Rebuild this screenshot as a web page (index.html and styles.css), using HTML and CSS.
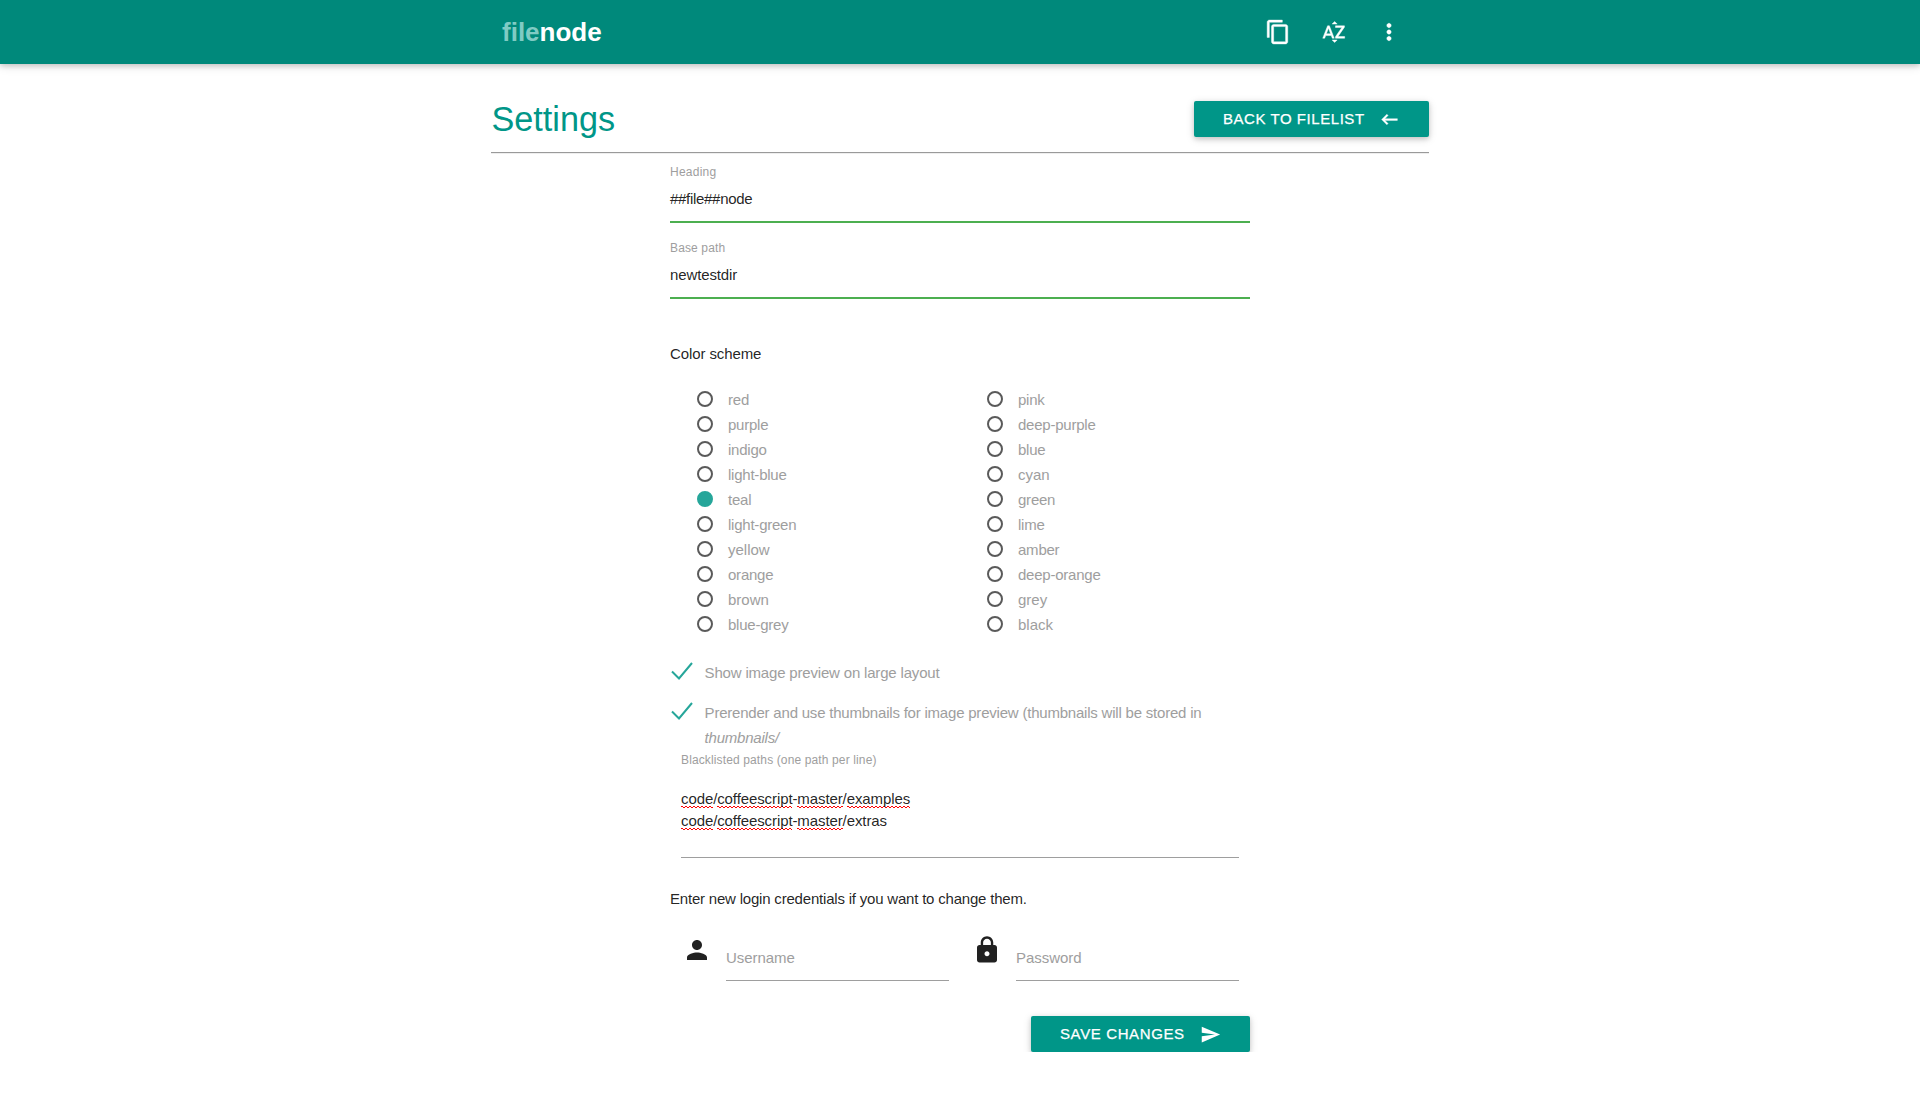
FILE: index.html
```html
<!DOCTYPE html>
<html lang="en">
<head>
<meta charset="utf-8">
<title>filenode</title>
<link rel="stylesheet" href="styles.css">
</head>
<body>
<nav class="navbar">
  <div class="nav-inner">
    <a class="logo"><span class="accent">file</span>node</a>
    <ul class="nav-actions">
      <li><svg class="nav-icon" viewBox="0 0 24 24"><path d="M16 1H4c-1.100 0-2 .9-2 2v14h2V3h12V1zm3 4H8c-1.100 0-2 .9-2 2v14c0 1.100.9 2 2 2h11c1.100 0 2-.9 2-2V7c0-1.100-.9-2-2-2zm0 16H8V7h11v14z"/></svg></li>
      <li><svg class="nav-icon" viewBox="0 0 24 24"><path d="M14.940 4.660h-4.720l2.360-2.360zm-4.690 14.710h4.660l-2.330 2.330zM6.100 6.270L1.600 17.730h1.840l.92-2.450h5.110l.92 2.450h1.840L7.740 6.270H6.100zm-1.130 7.370l1.940-5.180 1.940 5.180H4.970zm10.760 2.500h6.120v1.590h-8.530v-1.290l5.920-8.560h-5.880v-1.600h8.300v1.260l-5.930 8.600z"/></svg></li>
      <li><svg class="nav-icon nav-icon-more" viewBox="0 0 24 24"><path d="M12 8c1.100 0 2-.9 2-2s-.9-2-2-2-2 .9-2 2 .9 2 2 2zm0 2c-1.100 0-2 .9-2 2s.9 2 2 2 2-.9 2-2-.9-2-2-2zm0 6c-1.100 0-2 .9-2 2s.9 2 2 2 2-.9 2-2-.9-2-2-2z"/></svg></li>
    </ul>
  </div>
</nav>
<main class="container">
  <header class="page-head">
    <h1 class="title">Settings</h1>
    <a class="btn btn-back"><span class="back-text">Back to filelist</span><svg class="btn-icon" viewBox="0 0 24 24"><path d="M21 11H6.830l3.580-3.590L9 6l-6 6 6 6 1.410-1.410L6.830 13H21z"/></svg></a>
  </header>
  <hr class="rule">
  <form class="form">
    <div class="field">
      <label class="label">Heading</label>
      <div class="value value-heading">##file##node</div>
    </div>
    <div class="field">
      <label class="label label-tight">Base path</label>
      <div class="value value-base">newtestdir</div>
    </div>
    <p class="section">Color scheme</p>
    <div class="colors">
      <label class="radio"><i class="dot"></i>red</label>
      <label class="radio"><i class="dot"></i>pink</label>
      <label class="radio"><i class="dot"></i>purple</label>
      <label class="radio"><i class="dot"></i>deep-purple</label>
      <label class="radio"><i class="dot"></i>indigo</label>
      <label class="radio"><i class="dot"></i>blue</label>
      <label class="radio"><i class="dot"></i>light-blue</label>
      <label class="radio wide"><i class="dot"></i>cyan</label>
      <label class="radio"><i class="dot checked"></i>teal</label>
      <label class="radio"><i class="dot"></i>green</label>
      <label class="radio"><i class="dot"></i>light-green</label>
      <label class="radio"><i class="dot"></i>lime</label>
      <label class="radio wide"><i class="dot"></i>yellow</label>
      <label class="radio"><i class="dot"></i>amber</label>
      <label class="radio"><i class="dot"></i>orange</label>
      <label class="radio"><i class="dot"></i>deep-orange</label>
      <label class="radio wide"><i class="dot"></i>brown</label>
      <label class="radio wide"><i class="dot"></i>grey</label>
      <label class="radio"><i class="dot"></i>blue-grey</label>
      <label class="radio wide"><i class="dot"></i>black</label>
    </div>
    <div class="check-row">
      <svg class="tick" viewBox="0 0 22 18"><path d="M1 9.500L8 16.500L21 1"/></svg>
      <span class="check-text">Show image preview on large layout</span>
    </div>
    <div class="check-row check-row-last">
      <svg class="tick" viewBox="0 0 22 18"><path d="M1 9.500L8 16.500L21 1"/></svg>
      <span class="check-text">Prerender and use thumbnails for image preview (thumbnails will be stored in <em>thumbnails/</em></span>
    </div>
    <div class="blacklist">
      <label class="label label-tight">Blacklisted paths (one path per line)</label>
      <div class="area"><div><span class="typo">code</span>/<span class="typo">coffeescript</span>-<span class="typo">master</span>/<span class="typo">examples</span></div><div><span class="typo">code</span>/<span class="typo">coffeescript</span>-<span class="typo">master</span>/extras</div></div>
    </div>
    <p class="hint">Enter new login credentials if you want to change them.</p>
    <div class="credentials">
      <div class="cred">
        <svg class="prefix" viewBox="0 0 24 24"><path d="M12 12c2.210 0 4-1.790 4-4s-1.790-4-4-4-4 1.790-4 4 1.790 4 4 4zm0 2c-2.670 0-8 1.340-8 4v2h16v-2c0-2.660-5.330-4-8-4z"/></svg>
        <span class="cred-input">Username</span>
      </div>
      <div class="cred">
        <svg class="prefix" viewBox="0 0 24 24"><path d="M18 8h-1V6c0-2.760-2.240-5-5-5S7 3.240 7 6v2H6c-1.100 0-2 .9-2 2v10c0 1.100.9 2 2 2h12c1.100 0 2-.9 2-2V10c0-1.100-.9-2-2-2zm-6 9c-1.100 0-2-.9-2-2s.9-2 2-2 2 .9 2 2-.9 2-2 2zm3.100-9H8.900V6c0-1.710 1.390-3.100 3.100-3.100s3.100 1.390 3.100 3.100v2z"/></svg>
        <span class="cred-input">Password</span>
      </div>
    </div>
    <div class="actions">
      <a class="btn btn-save"><span class="save-text">Save changes</span><svg class="btn-icon" viewBox="0 0 24 24"><path d="M2.010 21L23 12 2.010 3 2 10l15 2-15 2z"/></svg></a>
    </div>
  </form>
</main>
</body>
</html>
```
FILE: styles.css
```css
* { box-sizing: border-box; }
body {
  margin: 0;
  background: #fff;
  color: rgba(0, 0, 0, 0.87);
  font: 15px/25px "Liberation Sans", Arial, sans-serif;
}
h1, p, ul { margin: 0; padding: 0; font-weight: normal; }
svg { display: block; flex: none; }

.navbar {
  height: 64px;
  background: #00897b;
  box-shadow: 0 2px 5px 0 rgba(0, 0, 0, 0.16), 0 2px 10px 0 rgba(0, 0, 0, 0.12);
}
.nav-inner {
  width: 938px;
  height: 64px;
  margin: 0 auto;
  padding: 0 11px;
  display: flex;
  justify-content: space-between;
  align-items: center;
}
.logo { color: #fff; font-size: 26px; font-weight: bold; line-height: 64px; }
.logo .accent { color: #80cbc4; }
.nav-actions { display: flex; list-style: none; }
.nav-actions li { padding: 0 15px; }
.nav-icon { width: 26px; height: 26px; fill: #fff; stroke: #fff; stroke-width: 0.4; }
.nav-icon-more { margin: 0 1px 0 -1px; }

.container { width: 938px; margin: 0 auto; }
.page-head {
  height: 88px;
  padding-top: 37px;
  display: flex;
  justify-content: space-between;
  align-items: flex-start;
}
.title { color: #009688; font-size: 34.2px; line-height: 36px; padding-left: 0.5px; }
.btn {
  height: 36px;
  padding: 0 29px;
  display: flex;
  align-items: center;
  justify-content: space-between;
  border-radius: 2px;
  background: #009688;
  color: #fff;
  line-height: 36px;
  text-transform: uppercase;
  letter-spacing: 0.55px;
  -webkit-text-stroke: 0.25px #fff;
  white-space: nowrap;
  box-shadow: 0 2px 5px 0 rgba(0, 0, 0, 0.16), 0 2px 10px 0 rgba(0, 0, 0, 0.12);
}
.btn-back { width: 235px; }
.btn-save { width: 219px; }
.save-text { letter-spacing: 0.62px; }
.btn-icon { width: 21px; height: 21px; fill: #fff; }
.btn-back .btn-icon { stroke: #fff; stroke-width: 0.4; }
.rule { margin: 0; height: 2px; border: 0; border-top: 1px solid #9a9a9a; border-bottom: 1px solid #eee; }

.form { width: 580px; margin: 0 auto; }
.field { height: 76px; padding-top: 15px; }
.field:first-child { height: 69px; padding-top: 8px; }
.label { display: block; color: #9e9e9e; font-size: 12px; line-height: 20px; letter-spacing: 0.25px; }
.label-tight { letter-spacing: 0.13px; }
.value { height: 41px; line-height: 34px; border-bottom: 2px solid #4caf50; }
.value-heading { letter-spacing: -0.3px; }
.value-base { letter-spacing: -0.12px; }

.section { margin-top: 42px; letter-spacing: -0.1px; }
.colors {
  margin-top: 21px;
  padding-left: 27px;
  display: grid;
  grid-template-columns: 290px 1fr;
  grid-auto-rows: 25px;
  color: #9e9e9e;
  letter-spacing: -0.23px;
}
.radio { display: flex; gap: 15px; }
.radio.wide { letter-spacing: 0; }
.dot { width: 16px; height: 16px; margin-top: 4px; border: 2px solid #5a5a5a; border-radius: 50%; }
.dot.checked { border-color: #26a69a; background: #26a69a; }

.check-row { display: flex; height: 40px; color: #9e9e9e; letter-spacing: -0.18px; }
.colors + .check-row { margin-top: 23px; }
.check-row-last { height: 50px; letter-spacing: -0.21px; }
.tick { width: 22px; height: 18px; margin: 2.4px 12px 0 0.6px; fill: none; stroke: #26a69a; stroke-width: 2; }
.check-text { width: 520px; }

.blacklist { padding: 0 11px; }
.area { height: 88px; padding-top: 18px; line-height: 22px; letter-spacing: -0.1px; border-bottom: 1px solid #9e9e9e; }
/* Spell-check squiggle: a 4px-period zigzag, 2px tall */
.typo {
  padding-bottom: 1px;
  background:
    linear-gradient(90deg, #f00 2px, transparent 2px) 0 calc(100% - 1px) / 4px 1px repeat-x,
    linear-gradient(90deg, transparent 2px, #f00 2px) 0 100% / 4px 1px repeat-x;
}

.hint { margin-top: 28px; letter-spacing: -0.2px; }
.credentials { margin-top: 24px; padding-left: 11px; display: grid; grid-template-columns: 290px 279px; }
.cred { display: flex; gap: 14.500px; }
.prefix { width: 30px; height: 30px; margin-left: 0.5px; fill: rgba(0, 0, 0, 0.87); }
.cred-input { width: 223px; height: 46px; line-height: 45px; color: #9e9e9e; letter-spacing: -0.05px; border-bottom: 1px solid #9e9e9e; }
.actions { margin-top: 35px; display: flex; justify-content: flex-end; }
```
